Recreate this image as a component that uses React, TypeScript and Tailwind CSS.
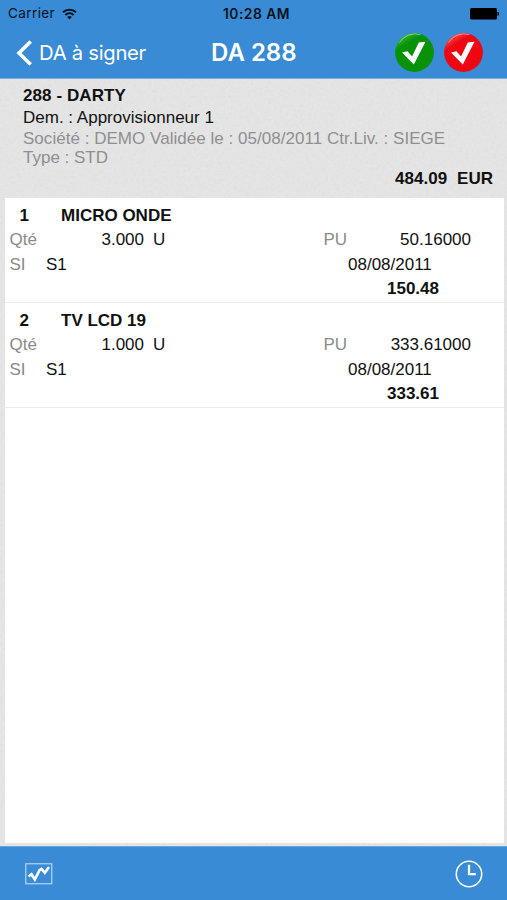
import React from "react";

type Line = { n: string; name: string; qty: string; price: string; total: string };

const lines: Line[] = [
  { n: "1", name: "MICRO ONDE", qty: "3.000", price: "50.16000", total: "150.48" },
  { n: "2", name: "TV LCD 19", qty: "1.000", price: "333.61000", total: "333.61" },
];

function PaperTexture() {
  return (
    <svg className="absolute inset-0 h-full w-full opacity-10" aria-hidden="true">
      <filter id="grain">
        <feTurbulence type="fractalNoise" baseFrequency="0.35" numOctaves="2" seed="4" />
        <feColorMatrix type="saturate" values="0" />
      </filter>
      <rect width="100%" height="100%" filter="url(#grain)" />
    </svg>
  );
}

function CheckBadge({ id, light, dark }: { id: string; light: string; dark: string }) {
  return (
    <svg width="40" height="40" viewBox="0 0 40 40">
      <defs>
        <linearGradient id={id} x1="0.2" y1="0" x2="0.8" y2="1">
          <stop offset="0" stopColor={light} />
          <stop offset="0.25" stopColor={dark} />
          <stop offset="0.9" stopColor={dark} />
          <stop offset="1" stopColor={light} />
        </linearGradient>
      </defs>
      <circle cx="19.5" cy="19.5" r="19.4" fill={`url(#${id})`} />
      <path d="M4.5 9.5A18.4 18.4 0 0 1 25.5 1.7" fill="none" stroke="#fff" strokeOpacity="0.45" strokeWidth="1" />
      <path d="M7 19.5L12.5 18.3L17 23.5L23.8 9.5L30.5 8.8L18.8 31.5Z" fill="#fff" />
    </svg>
  );
}

function Item({ line }: { line: Line }) {
  return (
    <li className="h-[105px] border-b border-[#ececec] pt-[5px] leading-[24.5px]">
      <div className="flex h-[24.5px] font-bold leading-[26px]">
        <span className="w-[42px] pl-[14.5px]">{line.n}</span>
        <span className="pl-[14px]">{line.name}</span>
      </div>
      <div className="flex">
        <span className="w-[60px] pl-[4.5px] text-[#8a8a8a]">Qté</span>
        <span className="w-[79px] text-right">{line.qty}</span>
        <span className="w-[179px] pl-[9px]">U</span>
        <span className="w-[50px] pl-[0.5px] text-[#8a8a8a]">PU</span>
        <span className="w-[98px] text-right">{line.price}</span>
      </div>
      <div className="flex h-[24.5px] leading-[26px]">
        <span className="w-[41px] pl-[4.5px] text-[#8a8a8a]">SI</span>
        <span className="w-[302px]">S1</span>
        <span>08/08/2011</span>
      </div>
      <div className="w-[434px] text-right font-bold">{line.total}</div>
    </li>
  );
}

export default function App() {
  return (
    <div className="flex h-[900px] w-[507px] flex-col overflow-hidden bg-[#e6e6e6] font-['Liberation_Sans',Arial,sans-serif] text-[17px] text-[#111]">
      <header className="h-[79px] shrink-0 border-b border-[#78afe0] bg-[#398bd5] font-['Inter',sans-serif]">
        <div className="grid h-[27px] grid-cols-3 items-center text-[13.5px] text-[#07121c]">
          <div className="flex items-center gap-[7px] pl-[8px]">
            <span className="tracking-[0.4px]">Carrier</span>
            <svg width="15" height="12" viewBox="0 0 15 12" fill="none" stroke="currentColor" strokeWidth="2">
              <path d="M1 4.3A9.6 9.6 0 0 1 14 4.3" />
              <path d="M3.4 6.9A6 6 0 0 1 11.6 6.9" />
              <path d="M5.2 8.9A3.5 3.5 0 0 1 9.8 8.9L7.5 11.5Z" fill="currentColor" stroke="none" />
            </svg>
          </div>
          <span className="pt-[2px] pl-[6px] text-center text-[13.8px] font-semibold tracking-[0.5px]">10:28 AM</span>
          <div className="flex justify-end pr-[7px]">
            <svg width="30" height="12" viewBox="0 0 30 12">
              <rect width="27" height="11.5" rx="1.5" fill="#000" />
              <path d="M28 4.2Q29.5 5.8 28 7.4Z" fill="#000" stroke="#000" />
            </svg>
          </div>
        </div>
        <div className="flex h-[51px] items-center text-white">
          <div className="flex w-[211px] items-center pl-[16px]">
            <svg width="17" height="26" viewBox="0 0 17 26" fill="none" stroke="currentColor" strokeWidth="3.6">
              <path d="M14.7 1.5L3 13L14.7 24.5" />
            </svg>
            <span className="pt-[2px] pl-[6px] text-[20.3px] tracking-[-0.3px]">DA à signer</span>
          </div>
          <h1 className="w-[184px] text-[24px] font-semibold">DA 288</h1>
          <div className="flex gap-[9px]">
            <CheckBadge id="accept" light="#42bd42" dark="#079207" />
            <CheckBadge id="reject" light="#ff6060" dark="#ee0712" />
          </div>
        </div>
      </header>

      <main className="relative flex min-h-0 flex-1 flex-col">
        <PaperTexture />
        <section className="relative h-[119px] shrink-0 pt-[5px] pl-[23px]">
          <div className="h-[22px] leading-[23px] font-bold tracking-[0.08px]">288 - DARTY</div>
          <div className="h-[22px] leading-[23px]">Dem. : Approvisionneur 1</div>
          <div className="h-[20px] leading-[21px] tracking-[0.03px] whitespace-nowrap text-[#8f8f8f]">
            Société : DEMO Validée le : 05/08/2011 Ctr.Liv. : SIEGE
          </div>
          <div className="h-[20px] leading-[20px] text-[#8f8f8f]">Type : STD</div>
          <div className="flex justify-end gap-[10px] pr-[14px] leading-[21px] font-bold">
            <span>484.09</span>
            <span>EUR</span>
          </div>
        </section>
        <ul className="relative mr-[3px] mb-[3px] ml-[5px] flex-1 bg-white">
          {lines.map((line) => (
            <Item key={line.n} line={line} />
          ))}
        </ul>
      </main>

      <footer className="flex h-[54px] shrink-0 items-center justify-between border-t border-[#65a5dc] bg-[#398bd5] pr-[24px] pl-[25px]">
        <svg width="28" height="22" viewBox="0 0 28 22" fill="none" stroke="#fff">
          <rect x="0.8" y="0.8" width="26" height="20" strokeOpacity="0.75" strokeWidth="1" />
          <path d="M3.5 13.5L6.5 11.2L9.8 16.5L14.5 7.2L16.5 6L19.8 9.8L24 4" strokeWidth="2.6" />
        </svg>
        <svg width="28" height="28" viewBox="0 0 28 28" fill="none" stroke="#fff">
          <circle cx="14" cy="14" r="12.7" strokeWidth="1.6" />
          <path d="M14 4.8V14.2H20.8" strokeWidth="2.3" />
        </svg>
      </footer>
    </div>
  );
}
